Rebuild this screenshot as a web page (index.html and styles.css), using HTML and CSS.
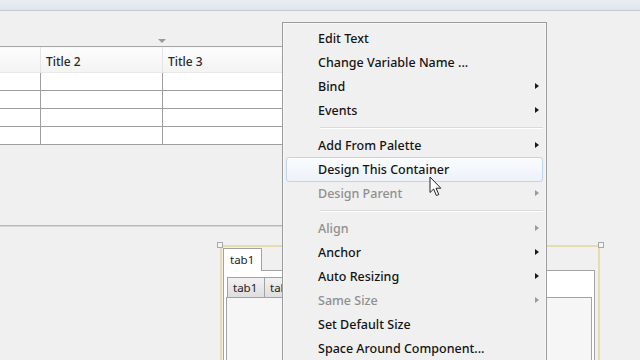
FILE: index.html
```html
<!DOCTYPE html>
<html lang="en">
<head>
  <meta charset="UTF-8" />
  <meta name="viewport" content="width=device-width, initial-scale=1.0" />
  <title>Form Designer</title>
  <link rel="stylesheet" href="styles.css">
</head>
<body>
  <div class="titlebar"></div>

  <div class="designer">
    <div class="grid-area">
      <div class="drop-mark"></div>
      <table class="grid">
        <thead>
          <tr><th class="col1"></th><th class="col2">Title 2</th><th class="col3">Title 3</th></tr>
        </thead>
        <tbody>
          <tr><td></td><td></td><td></td></tr>
          <tr><td></td><td></td><td></td></tr>
          <tr><td></td><td></td><td></td></tr>
          <tr><td></td><td></td><td></td></tr>
        </tbody>
      </table>
    </div>

    <div class="splitter"></div>

    <div class="tab-frame">
      <span class="handle handle-left"></span>
      <span class="handle handle-right"></span>
      <div class="tab-strip">
        <span class="tab tab-active">tab1</span>
      </div>
      <div class="tab-panel">
        <div class="tab-strip inner">
          <span class="tab tab-inner">tab1</span>
          <span class="tab tab-inner">tab2</span>
        </div>
        <div class="inner-panel"></div>
      </div>
    </div>
  </div>

  <div class="context-menu">
    <div class="item">Edit Text</div>
    <div class="item">Change Variable Name ...</div>
    <div class="item sub">Bind</div>
    <div class="item sub">Events</div>
    <div class="sep"></div>
    <div class="item sub">Add From Palette</div>
    <div class="item hover">Design This Container</div>
    <div class="item sub disabled">Design Parent</div>
    <div class="sep"></div>
    <div class="item sub disabled">Align</div>
    <div class="item sub">Anchor</div>
    <div class="item sub">Auto Resizing</div>
    <div class="item sub disabled">Same Size</div>
    <div class="item">Set Default Size</div>
    <div class="item">Space Around Component...</div>
  </div>

  <svg class="cursor" width="13" height="21" viewBox="0 0 13 21">
    <path d="M1 1 L1 16.5 L4.6 13 L7.4 19.5 L9.8 18.5 L7 12.2 L11.8 12.2 Z" fill="#fff" stroke="#222" stroke-width="1" stroke-linejoin="round" />
  </svg>
</body>
</html>
```

FILE: styles.css
```css
body {
  margin: 0;
  width: 640px;
  height: 360px;
  overflow: hidden;
  background: #f0f0f0;
  font-family: 'Noto Sans', 'Open Sans', sans-serif;
  color: #1c1c1c;
  position: relative;
}

.titlebar {
  height: 10px;
  background: linear-gradient(#eaeef3, #dfe5ec);
  border-bottom: 1px solid #c4cbd4;
}

.designer {
  display: flex;
  flex-direction: column;
}

/* table */
.grid-area {
  margin-left: -61px;
  margin-top: 28px;
}

.drop-mark {
  width: 0;
  height: 0;
  margin-left: 219px;
  margin-bottom: 3px;
  border-left: 4px solid transparent;
  border-right: 4px solid transparent;
  border-top: 4px solid #9a9a9a;
}

.grid {
  border-collapse: collapse;
  table-layout: fixed;
  width: 400px;
}

.grid th {
  height: 22px;
  padding: 3px 0 0 5px;
  text-align: left;
  font-weight: 500;
  font-size: 12px;
  color: #2a2a2a;
  background: linear-gradient(#fdfdfd, #f3f3f3);
  border-top: 1px solid #a5a5a5;
  border-left: 1px solid #e4e4e4;
}

.grid .col1 { width: 95px; }
.grid .col2 { width: 116px; }
.grid .col3 { width: 180px; }

.grid td {
  height: 17px;
  padding: 0;
  background: #fff;
  border: 1px solid #9e9e9e;
  border-top-color: #a8a8a8;
}

.grid tbody tr:first-child td {
  border-top-color: #e8e8e8;
}

.splitter {
  margin-top: 80px;
  height: 1px;
  width: 283px;
  background: #b8b8b8;
  border-bottom: 1px solid #d6d6d6;
}

/* tabbed pane */
.tab-frame {
  position: relative;
  margin-top: 18px;
  margin-left: 220px;
  width: 375px;
  height: 130px;
  border: 2px solid #e8dcae;
  border-bottom: none;
  padding: 1px 0 0 1px;
}

.handle {
  position: absolute;
  top: -5px;
  width: 4px;
  height: 4px;
  border: 1px solid #a9a9a9;
  background: #f4f4f4;
}

.handle-left { left: -5px; }
.handle-right { right: -6px; }

.tab-strip {
  display: flex;
}

.tab {
  font-size: 11.5px;
  color: #222;
  border: 1px solid #a3a3a3;
  border-bottom: none;
}

.tab-active {
  width: 31px;
  height: 22px;
  line-height: 22px;
  padding-left: 6px;
  background: #fff;
}

.tab-panel {
  height: 100px;
  margin-right: 3px;
  margin-top: -1px;
  border-top: 1px solid #a3a3a3;
  border-right: 1px solid #a3a3a3;
  border-left: 1px solid #a3a3a3;
  background: #fff;
  padding: 6px 2px 0 2px;
}

.tab-strip.inner {
  margin-left: 1px;
}

.tab-inner {
  width: 31px;
  height: 19px;
  line-height: 19px;
  padding-left: 5px;
  background: linear-gradient(#f2f2f2, #dedede);
  border-right: none;
}

.inner-panel {
  height: 70px;
  border: 1px solid #a3a3a3;
  border-bottom: none;
  background: #f6f6f6;
}

/* context menu */
.context-menu {
  position: absolute;
  left: 282px;
  top: 22px;
  width: 263px;
  height: 350px;
  padding-top: 3px;
  background: #f0f0f0;
  border: 1px solid #9c9c9c;
  box-shadow: inset 0 0 0 1px #f7f7f7;
}

.item {
  position: relative;
  height: 24px;
  line-height: 23px;
  margin: 0 3px;
  padding-left: 32px;
  font-size: 12.5px;
  font-weight: 500;
  color: #141414;
  border: 1px solid transparent;
  border-left: none;
  border-right: none;
  box-sizing: border-box;
}

.item.disabled {
  color: #8f8f8f;
}

.item.sub::after {
  content: '';
  position: absolute;
  right: 4px;
  top: 8px;
  border-left: 4px solid #1a1a1a;
  border-top: 3.5px solid transparent;
  border-bottom: 3.5px solid transparent;
}

.item.disabled::after {
  border-left-color: #9a9a9a;
}

.item.hover {
  height: 25px;
  margin-bottom: -1px;
  padding-left: 31px;
  border: 1px solid #c2d3ea;
  border-radius: 3px;
  background: linear-gradient(#fafcfe, #edf2f9);
}

.sep {
  height: 5px;
  margin: 0 3px 5px 37px;
  border-bottom: 1px solid #dadada;
  box-shadow: 0 1px 0 #fff;
}

.cursor {
  position: absolute;
  left: 429px;
  top: 176px;
}
```
